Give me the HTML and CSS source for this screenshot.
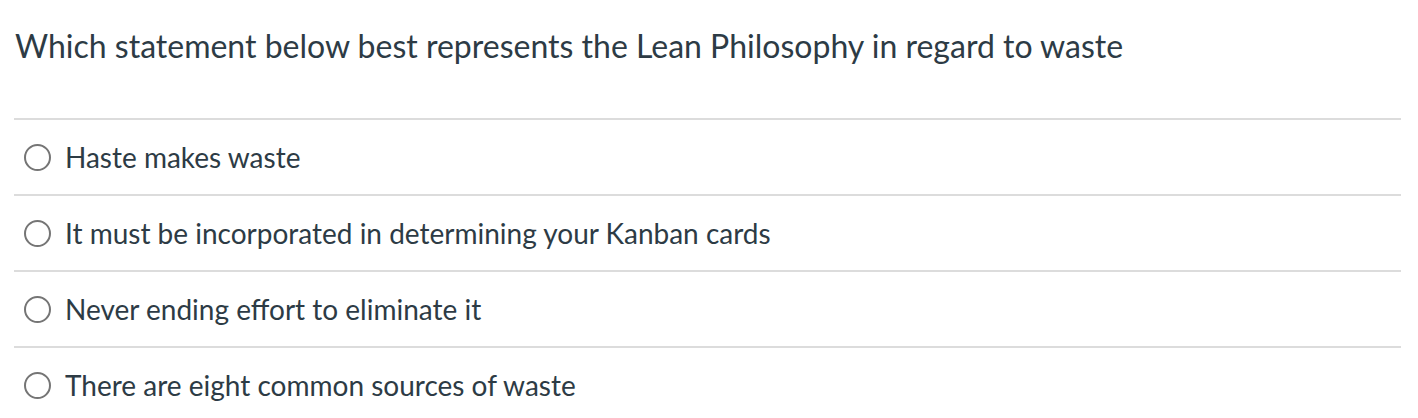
FILE: index.html
```html
<!DOCTYPE html>
<html>
<head>
<meta charset="utf-8">
<link rel="stylesheet" href="styles.css">
</head>
<body>
<div class="quiz">
  <div class="question">Which statement below best represents the Lean Philosophy in regard to waste</div>
  <div class="answers">
    <label class="answer"><span class="radio"></span><span class="text">Haste makes waste</span></label>
    <label class="answer"><span class="radio"></span><span class="text">It must be incorporated in determining your Kanban cards</span></label>
    <label class="answer"><span class="radio"></span><span class="text">Never ending effort to eliminate it</span></label>
    <label class="answer"><span class="radio"></span><span class="text">There are eight common sources of waste</span></label>
  </div>
</div>
</body>
</html>
```
FILE: styles.css
```css
html, body {
  margin: 0;
  background: #fff;
}
.quiz {
  padding: 0 17px 0 14px;
  font-family: Lato, "Liberation Sans", sans-serif;
  color: #2d3b45;
}
.question {
  font-size: 32px;
  line-height: 38px;
  padding: 27px 0 0 1px;
  height: 118px;
  box-sizing: border-box;
}
.answers {
  display: flex;
  flex-direction: column;
}
.answer {
  display: flex;
  align-items: center;
  height: 76px;
  border-top: 2px solid #dcdcdc;
  box-sizing: border-box;
}
.radio {
  width: 27px;
  height: 27px;
  box-sizing: border-box;
  border: 2px solid #757575;
  border-radius: 50%;
  margin-left: 10px;
  margin-right: 14px;
  flex: none;
}
.text {
  font-size: 28px;
}
```
